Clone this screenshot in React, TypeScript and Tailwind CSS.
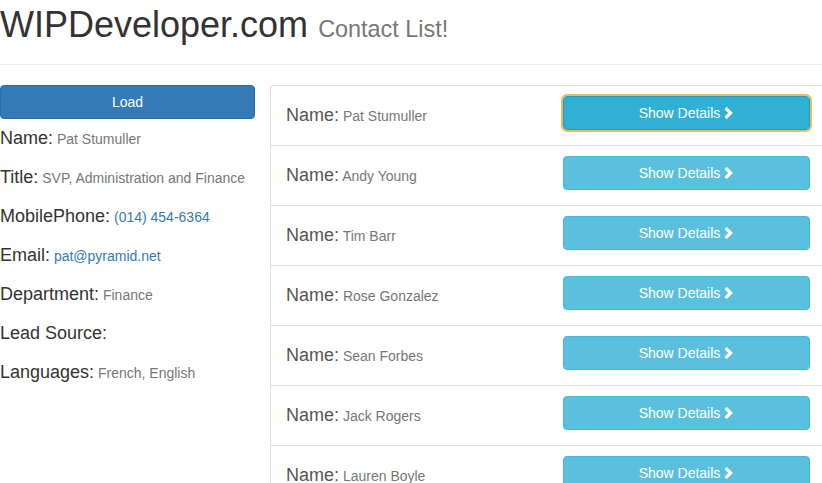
import React from "react";

const contacts = [
  "Pat Stumuller",
  "Andy Young",
  "Tim Barr",
  "Rose Gonzalez",
  "Sean Forbes",
  "Jack Rogers",
  "Lauren Boyle",
];

function Chevron() {
  return (
    <svg width="10" height="12" viewBox="0 0 10 12" className="inline-block ml-[4px] align-[-1px]">
      <path d="M1.6 1 L6.6 6 L1.6 11" fill="none" stroke="#fff" strokeWidth="3.2" strokeLinejoin="miter" />
    </svg>
  );
}

function Detail({ label, value, link }: { label: string; value?: string; link?: boolean }) {
  return (
    <div className="h-[26px] leading-[26px] mb-[13px] whitespace-nowrap">
      <span className="text-[18px] text-[#333]">{label}</span>
      {value ? (
        <span className={"text-[14px] leading-none " + (link ? "text-[#337ab7]" : "text-[#777]")}> {value}</span>
      ) : null}
    </div>
  );
}

export default function App() {
  return (
    <div
      className="w-[822px] h-[483px] overflow-hidden bg-white"
      style={{ fontFamily: '"Liberation Sans", Arial, sans-serif' }}
    >
      <div className="w-[840px]">
        <div className="pt-[5px] pb-[9px] mb-[20px] border-b border-[#eee] w-[822px]">
          <h1 className="h-[39.6px] text-[36px] leading-[39.6px] text-[#333] mb-[10px] whitespace-nowrap">
            WIPDeveloper.com <span className="text-[23.4px] leading-none text-[#777]">Contact List!</span>
          </h1>
        </div>
        <div className="flex">
          <div className="w-[255px] shrink-0">
            <button className="w-[255px] h-[34px] bg-[#337ab7] border border-[#2e6da4] rounded-[4px] text-white text-[14px] leading-[20px]">
              Load
            </button>
            <div className="mt-[6.5px]">
              <Detail label="Name:" value="Pat Stumuller" />
              <Detail label="Title:" value="SVP, Administration and Finance" />
              <Detail label="MobilePhone:" value="(014) 454-6364" link />
              <Detail label="Email:" value="pat@pyramid.net" link />
              <Detail label="Department:" value="Finance" />
              <Detail label="Lead Source:" />
              <Detail label="Languages:" value="French, English" />
            </div>
          </div>
          <div className="ml-[15px] w-[556px] shrink-0 border-l border-r border-[#ddd] rounded-tl-[4px] rounded-tr-[4px]">
            {contacts.map((name, i) => (
              <div
                key={name}
                className={
                  "h-[60px] flex justify-between items-start border-t border-[#ddd] pl-[15px] pr-[15px] pt-[10px] " +
                  (i === 0 ? "rounded-t-[4px]" : "")
                }
              >
                <div className="h-[39px] leading-[39px] whitespace-nowrap">
                  <span className="text-[18px] text-[#555]">Name:</span>
                  <span className="text-[14px] leading-none text-[#777]"> {name}</span>
                </div>
                <button
                  className={
                    "w-[247px] h-[34px] rounded-[4px] border text-white text-[14px] leading-[20px] " +
                    (i === 0
                      ? "bg-[#31b0d5] border-[#269abc] outline-2 outline-solid outline-[#ebbb62] outline-offset-0"
                      : "bg-[#5bc0de] border-[#46b8da]")
                  }
                >
                  Show Details
                  <Chevron />
                </button>
              </div>
            ))}
          </div>
        </div>
      </div>
    </div>
  );
}
